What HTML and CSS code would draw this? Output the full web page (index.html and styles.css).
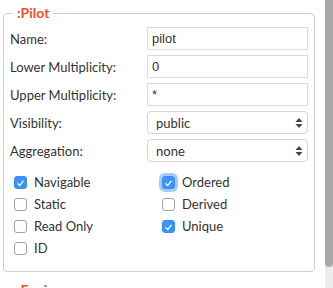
FILE: index.html
```html
<!DOCTYPE html>
<html lang="en">
<head>
    <meta charset="UTF-8">
    <title>Properties</title>
    <link rel="stylesheet" href="styles.css">
</head>
<body>
    <div class="panel">
        <fieldset class="element">
            <legend>:Pilot</legend>
            <div class="fields">
                <label>Name:</label>
                <input type="text" value="pilot">
                <label>Lower Multiplicity:</label>
                <input type="text" value="0">
                <label>Upper Multiplicity:</label>
                <input type="text" value="*">
                <label>Visibility:</label>
                <div class="select-wrap">
                    <select><option>public</option></select>
                    <svg class="arrows" width="8" height="12" viewBox="0 0 8 12"><path d="M4 1 L7.5 5 H0.5 Z M4 11 L7.5 7 H0.5 Z" fill="#444"/></svg>
                </div>
                <label>Aggregation:</label>
                <div class="select-wrap">
                    <select><option>none</option></select>
                    <svg class="arrows" width="8" height="12" viewBox="0 0 8 12"><path d="M4 1 L7.5 5 H0.5 Z M4 11 L7.5 7 H0.5 Z" fill="#444"/></svg>
                </div>
            </div>
            <div class="flags">
                <label class="check"><span class="box on"><svg width="13" height="13" viewBox="0 0 13 13"><path d="M3.5 6.8 L5.6 9 L9.6 3.8" fill="none" stroke="#fff" stroke-width="1.5" stroke-linecap="round" stroke-linejoin="round"/></svg></span>Navigable</label>
                <label class="check"><span class="box on focus"><svg width="13" height="13" viewBox="0 0 13 13"><path d="M3.5 6.8 L5.6 9 L9.6 3.8" fill="none" stroke="#fff" stroke-width="1.5" stroke-linecap="round" stroke-linejoin="round"/></svg></span>Ordered</label>
                <label class="check"><span class="box"></span>Static</label>
                <label class="check"><span class="box"></span>Derived</label>
                <label class="check"><span class="box"></span>Read Only</label>
                <label class="check"><span class="box on"><svg width="13" height="13" viewBox="0 0 13 13"><path d="M3.5 6.8 L5.6 9 L9.6 3.8" fill="none" stroke="#fff" stroke-width="1.5" stroke-linecap="round" stroke-linejoin="round"/></svg></span>Unique</label>
                <label class="check"><span class="box"></span>ID</label>
            </div>
        </fieldset>
        <fieldset class="element">
            <legend>:Engine</legend>
        </fieldset>
    </div>
    <div class="scrollbar"><div class="thumb"></div></div>
</body>
</html>
```

FILE: styles.css
```css
html, body {
    margin: 0;
    padding: 0;
    height: 288px;
    overflow: hidden;
    background: #fff;
}

body {
    font-family: Lato, 'Noto Sans', sans-serif;
    font-size: 13px;
    color: #333;
}

.panel {
    width: 325px;
    padding-top: 5px;
}

.element {
    margin: 0 0 10px 3px;
    width: 312px;
    min-width: 0;
    box-sizing: border-box;
    border: 1px solid #cfcfcf;
    border-radius: 4px;
    padding: 0 6px 12px 6px;
}

.element legend {
    margin-left: 3px;
    padding: 0 4px;
    font-size: 14px;
    line-height: 16px;
    font-weight: bold;
    color: #f04e2a;
}

.fields {
    display: grid;
    grid-template-columns: 137px minmax(0, 1fr);
    row-gap: 5px;
    align-items: center;
    margin-top: 6px;
}

.fields input {
    width: 100%;
    height: 23px;
    box-sizing: border-box;
    margin: 0;
    border: 1px solid #dcdcdc;
    border-radius: 0;
    padding: 0 4px;
    font-family: 'Liberation Sans', Arial, sans-serif;
    font-size: 13px;
    color: #333;
    outline: none;
}

.select-wrap {
    position: relative;
    height: 23px;
}

.select-wrap select {
    appearance: none;
    -webkit-appearance: none;
    width: 100%;
    height: 23px;
    margin: 0;
    border: 1px solid #d6d6d6;
    border-radius: 4px;
    background: #fff;
    padding: 0 8px;
    font-family: Lato, sans-serif;
    font-size: 13px;
    color: #333;
}

.arrows {
    position: absolute;
    right: 5px;
    top: 6px;
    pointer-events: none;
}

.flags {
    display: grid;
    grid-template-columns: 148px 1fr;
    margin-top: 9px;
    padding-left: 4px;
}

.check {
    display: flex;
    align-items: center;
    gap: 7px;
    height: 22px;
}

.box {
    width: 13px;
    height: 13px;
    box-sizing: border-box;
    border: 1px solid #a3a3a3;
    border-radius: 3px;
    background: #fff;
    display: flex;
}

.box.on {
    border-color: #3b8ef5;
    background: #3b93fb;
}

.box.focus {
    box-shadow: 0 0 0 3px rgba(80, 150, 245, 0.5);
}

.scrollbar {
    position: absolute;
    top: 0;
    right: 0;
    width: 8px;
    height: 288px;
    background: #ececec;
}

.thumb {
    height: 267px;
    background: #a9a9a9;
    border-radius: 0 0 4px 4px;
}
```
